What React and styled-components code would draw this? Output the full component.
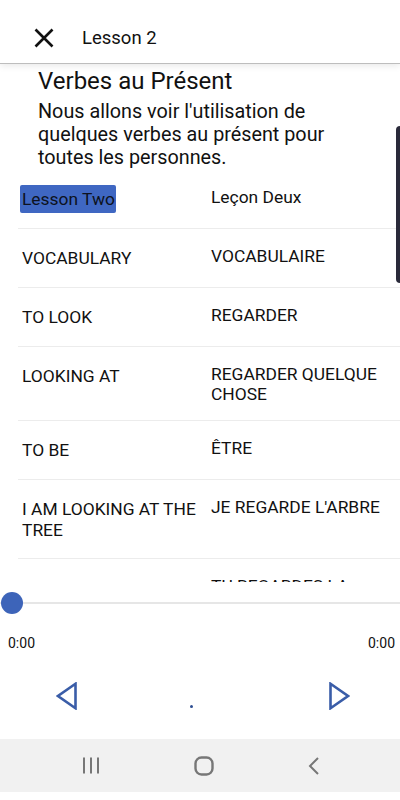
import React from "react";
import styled, { createGlobalStyle } from "styled-components";

const Global = createGlobalStyle`
  html, body { margin: 0; padding: 0; background: #fff; }
  body { font-family: Roboto, "Noto Sans", sans-serif; color: #111; }
  * { box-sizing: border-box; }
`;

const Screen = styled.div`
  width: 400px;
  height: 800px;
  display: flex;
  flex-direction: column;
  background: #fff;
  position: relative;
  overflow: hidden;
`;

const Header = styled.header`
  height: 64px;
  flex: none;
  display: flex;
  align-items: center;
  padding: 12px 0 0 34px;
  gap: 28px;
  border-bottom: 1px solid #bdbdbd;
  box-shadow: 0 2px 7px rgba(0, 0, 0, 0.09);
  position: relative;
  z-index: 2;
  background: #fff;
`;

const HeaderTitle = styled.h1`
  margin: 0;
  font-size: 18.5px;
  font-weight: 400;
  color: #111;
  padding-top: 1px;
`;

const CloseButton = styled.button`
  border: 0;
  background: none;
  padding: 0;
  width: 20px;
  height: 20px;
  display: flex;
  margin-top: 0px;
`;

const Scroller = styled.div`
  height: 518px;
  flex: none;
  overflow: hidden;
  position: relative;
`;

const ScrollThumb = styled.div`
  position: absolute;
  right: 0;
  top: 62px;
  width: 4px;
  height: 157px;
  background: #2a2a3a;
  border-radius: 4px 0 0 4px;
`;

const Intro = styled.div`
  padding: 4px 0 0 38px;
`;

const Title = styled.h2`
  margin: 0;
  font-size: 24px;
  line-height: 27px;
  font-weight: 400;
  color: #111;
`;

const Description = styled.p`
  margin: 5px 0 0 0;
  font-size: 19.8px;
  line-height: 23px;
  color: #111;
  width: 300px;
`;

const Table = styled.div`
  margin: 1px 0 0 18px;
`;

const Row = styled.div`
  display: grid;
  grid-template-columns: 191px 1fr;
  min-height: 59px;
  border-bottom: 1px solid #ececec;
`;

const Cell = styled.div`
  font-size: 17.4px;
  color: #111;
  padding: ${(p) => (p.$side === "left" ? "19px 2px 17px 4px" : "17px 6px 16px 2px")};
  line-height: ${(p) => (p.$side === "left" ? "21px" : "20px")};
`;

const Highlight = styled.span`
  background: #3f67c2;
  color: #0d1220;
  padding: 4px 1px 4px 2px;
  margin-left: -2px;
  border-radius: 2px;
`;

const Player = styled.div`
  flex: none;
  display: flex;
  flex-direction: column;
`;

const SliderArea = styled.div`
  height: 42px;
  position: relative;
  display: flex;
  align-items: center;
`;

const Track = styled.div`
  width: 100%;
  height: 2px;
  background: #e6e6e6;
`;

const Thumb = styled.div`
  position: absolute;
  left: 1px;
  top: 10px;
  width: 22px;
  height: 22px;
  border-radius: 50%;
  background: #3d64b9;
`;

const Times = styled.div`
  height: 38px;
  display: flex;
  justify-content: space-between;
  align-items: center;
  padding: 0 5px 0 8px;
  font-size: 14px;
  color: #111;
`;

const Controls = styled.div`
  height: 77px;
  display: flex;
  align-items: center;
  padding: 0 0 0 56px;
`;

const NavButton = styled.button`
  border: 0;
  background: none;
  padding: 0;
  width: 21px;
  height: 28px;
  display: flex;
  margin-top: -10px;
`;

const Dot = styled.span`
  width: 3px;
  height: 3px;
  border-radius: 50%;
  background: #2d4e92;
  margin: 12px 136px 0 113px;
`;

const SystemBar = styled.nav`
  height: 53px;
  background: #f1f1f1;
  display: flex;
  align-items: center;
  justify-content: space-between;
  padding: 0 80px 0 82px;
  flex: none;
`;

const SysIcon = styled.svg`
  display: block;
`;

const rows = [
  ["__hl", "Leçon Deux"],
  ["VOCABULARY", "VOCABULAIRE"],
  ["TO LOOK", "REGARDER"],
  ["LOOKING AT", "REGARDER QUELQUE CHOSE"],
  ["TO BE", "ÊTRE"],
  ["I AM LOOKING AT THE TREE", "JE REGARDE L'ARBRE"],
  ["YOU ARE LOOKING AT THE HOUSE", "TU REGARDES LA MAISON"],
  ["HE IS", "IL EST"],
];

export default function App() {
  return (
    <>
      <Global />
      <Screen>
        <Header>
          <CloseButton aria-label="close">
            <svg width="20" height="20" viewBox="0 0 20 20">
              <path d="M1.5 1.5 L18.5 18.5 M18.5 1.5 L1.5 18.5" stroke="#111" strokeWidth="2.6" />
            </svg>
          </CloseButton>
          <HeaderTitle>Lesson 2</HeaderTitle>
        </Header>
        <Scroller>
          <Intro>
            <Title>Verbes au Présent</Title>
            <Description>
              Nous allons voir l'utilisation de quelques verbes au présent pour toutes les personnes.
            </Description>
          </Intro>
          <Table>
            {rows.map(([l, r], i) => (
              <Row key={i}>
                <Cell $side="left">{l === "__hl" ? <Highlight>Lesson Two</Highlight> : l}</Cell>
                <Cell $side="right">{r}</Cell>
              </Row>
            ))}
          </Table>
          <ScrollThumb />
        </Scroller>
        <Player>
          <SliderArea>
            <Track />
            <Thumb />
          </SliderArea>
          <Times>
            <span>0:00</span>
            <span>0:00</span>
          </Times>
          <Controls>
            <NavButton aria-label="previous">
              <svg width="21" height="28" viewBox="0 0 21 28">
                <path d="M19.5 1.8 L19.5 26.2 L2 14 Z" fill="none" stroke="#3a5da8" strokeWidth="2.6" strokeLinejoin="miter" />
              </svg>
            </NavButton>
            <Dot />
            <NavButton aria-label="next">
              <svg width="21" height="28" viewBox="0 0 21 28">
                <path d="M1.5 1.8 L1.5 26.2 L19 14 Z" fill="none" stroke="#3a5da8" strokeWidth="2.6" strokeLinejoin="miter" />
              </svg>
            </NavButton>
          </Controls>
        </Player>
        <SystemBar>
          <SysIcon width="18" height="17" viewBox="0 0 18 17">
            <path d="M2 0.5 V16.5 M9 0.5 V16.5 M16 0.5 V16.5" stroke="#777" strokeWidth="2" />
          </SysIcon>
          <SysIcon width="20" height="20" viewBox="0 0 20 20">
            <rect x="1.5" y="1.5" width="17" height="17" rx="6" fill="none" stroke="#777" strokeWidth="2.4" />
          </SysIcon>
          <SysIcon width="12" height="18" viewBox="0 0 12 18">
            <path d="M10 1 L2 9 L10 17" fill="none" stroke="#777" strokeWidth="2" />
          </SysIcon>
        </SystemBar>
      </Screen>
    </>
  );
}
